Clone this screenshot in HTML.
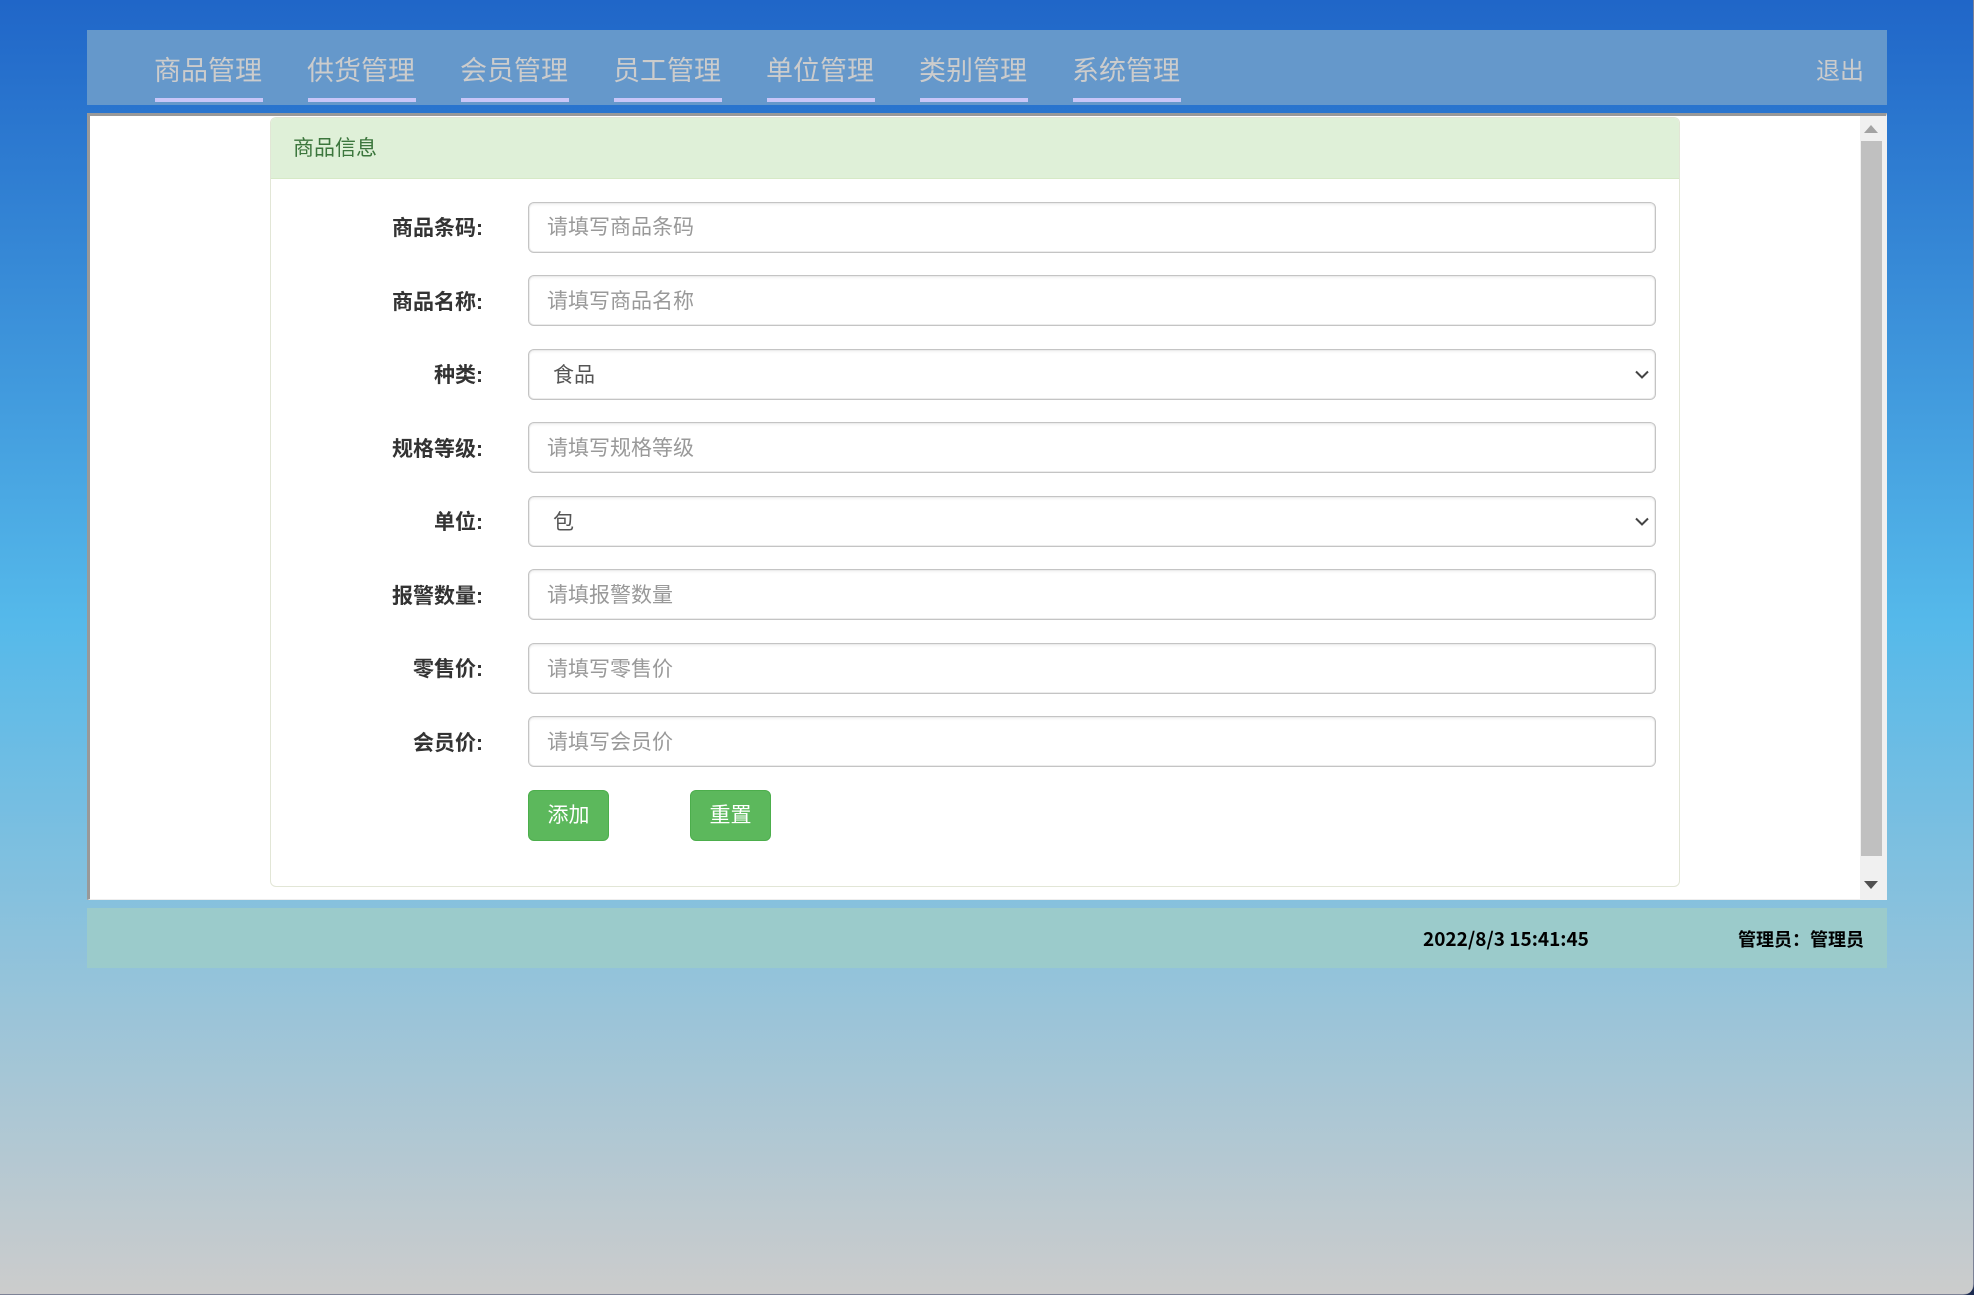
<!DOCTYPE html>
<html lang="zh-CN">
<head>
<meta charset="utf-8">
<title>商品信息</title>
<style>
*{box-sizing:border-box;margin:0;padding:0}
html,body{width:1974px;height:1295px;overflow:hidden}
body{position:relative;font-family:"Liberation Sans","Noto Sans CJK SC",sans-serif;background:linear-gradient(to bottom,#2066c8 0%,#55b9ea 48%,#cccccc 100%)}
.abs{position:absolute}
.nav{left:87px;top:30px;width:1800px;height:75px;background:#6598cb}
.nav a{position:absolute;top:20px;width:108px;height:52px;line-height:43px;font-size:27px;color:#ccc;white-space:nowrap;border-bottom:4px solid #c8c6f8;text-decoration:none;text-indent:-1px}
.nav .out{left:1730px;top:20px;width:50px;height:40px;font-size:24px;line-height:43px;border:0}
.frame{left:87px;top:113px;width:1800px;height:787px;background:#fff;border-top:3px solid #999;border-left:3px solid #999;border-right:1px solid #f0f0f0;border-bottom:1px solid #eee}
.card{position:absolute;left:270px;top:117px;width:1410px;height:770px;background:#fff;border:1px solid #e2e6d6;border-radius:6px;overflow:hidden}
.head{position:absolute;left:0;top:0;width:100%;height:61px;background:#dff0d8;border-bottom:1px solid #d6e9c6;color:#3c763d;font-size:21px;line-height:62px;padding-left:22px}
label{position:absolute;right:1196px;width:200px;height:51px;line-height:53px;text-align:right;font-weight:700;font-size:21px;color:#333;white-space:nowrap}
input,select{position:absolute;left:257px;width:1128px;height:51px;background:#fff;border:1px solid #c4c4c4;border-radius:6px;font:21px "Liberation Sans","Noto Sans CJK SC",sans-serif;color:#555;padding:1px 18px 0;outline:0;appearance:none;-webkit-appearance:none;box-shadow:inset 0 0 0 1px #ececec,inset 0 2px 2px rgba(0,0,0,.05)}
input.d{padding-top:3px}
input::placeholder{color:#999;opacity:1}
select{padding:2px 19px 0 24px}
.chev{position:absolute;left:1364px;width:14px;height:9px}
.btn{position:absolute;top:672px;width:81px;height:51px;background:#5cb85c;border:1px solid #4cae4c;border-radius:6px;color:#fff;font:21px/49px "Liberation Sans","Noto Sans CJK SC",sans-serif;text-align:center}
.sb{left:1860px;top:116px;width:27px;height:784px;background:#f0f0f0}
.thumb{left:1861px;top:141px;width:21px;height:715px;background:#c0c0c0}
.foot{left:87px;top:908px;width:1800px;height:60px;background:#9bcbcb;font-weight:700;color:#000;font-size:18px;line-height:62px;white-space:nowrap}
.corner{left:0;top:0;width:1974px;height:1295px;pointer-events:none}
</style>
</head>
<body>
<div class="abs nav">
<a style="left:68px">商品管理</a>
<a style="left:221px">供货管理</a>
<a style="left:374px">会员管理</a>
<a style="left:527px">员工管理</a>
<a style="left:680px">单位管理</a>
<a style="left:833px">类别管理</a>
<a style="left:986px">系统管理</a>
<a class="out">退出</a>
</div>
<div class="abs frame"></div>
<div class="card">
<div class="head">商品信息</div>
<label style="top:84px">商品条码:</label>
<input style="top:84px" placeholder="请填写商品条码">
<label style="top:158px">商品名称:</label>
<input class="d" style="top:157px" placeholder="请填写商品名称">
<label style="top:231px">种类:</label>
<select style="top:231px"><option>食品</option></select>
<svg class="chev" style="top:252px" viewBox="0 0 14 9"><path d="M1 1.5 7 7.5 13 1.5" fill="none" stroke="#444" stroke-width="2"/></svg>
<label style="top:305px">规格等级:</label>
<input class="d" style="top:304px" placeholder="请填写规格等级">
<label style="top:378px">单位:</label>
<select style="top:378px"><option>包</option></select>
<svg class="chev" style="top:399px" viewBox="0 0 14 9"><path d="M1 1.5 7 7.5 13 1.5" fill="none" stroke="#444" stroke-width="2"/></svg>
<label style="top:452px">报警数量:</label>
<input class="d" style="top:451px" placeholder="请填报警数量">
<label style="top:525px">零售价:</label>
<input class="d" style="top:525px" placeholder="请填写零售价">
<label style="top:599px">会员价:</label>
<input class="d" style="top:598px" placeholder="请填写会员价">
<div class="btn" style="left:257px">添加</div>
<div class="btn" style="left:419px">重置</div>
</div>
<div class="abs sb"></div>
<div class="abs thumb"></div>
<svg class="abs" style="left:1864px;top:125px" width="14" height="8" viewBox="0 0 14 8"><path d="M7 0 14 8H0Z" fill="#a3a3a3"/></svg>
<svg class="abs" style="left:1864px;top:881px" width="14" height="8" viewBox="0 0 14 8"><path d="M0 0H14L7 8Z" fill="#505050"/></svg>
<div class="abs foot">
<span class="abs" style="left:1336px;font-size:19px;font-family:'Noto Sans CJK SC','Liberation Sans',sans-serif">2022/8/3 15:41:45</span>
<span class="abs" style="left:1651px;font-family:'Noto Sans CJK SC','Liberation Sans',sans-serif">管理员：管理员</span>
</div>
<svg class="abs corner" viewBox="0 0 1974 1295"><path d="M1973.5 0V1285Q1973.5 1294.5 1964 1294.5H0" fill="none" stroke="#7d8296" stroke-width="1"/><path d="M1974 1284V1295H1963Q1973 1294 1974 1284Z" fill="#1c2b50"/></svg>
</body>
</html>
